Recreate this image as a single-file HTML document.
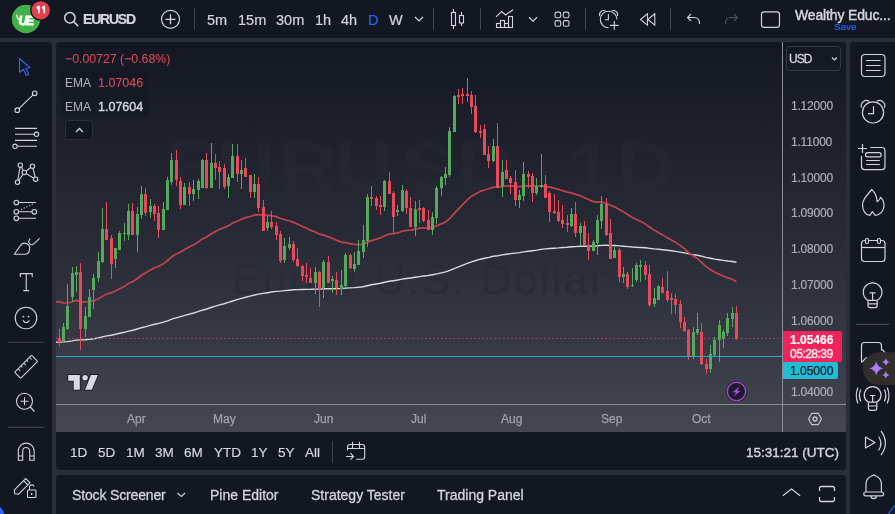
<!DOCTYPE html>
<html><head><meta charset="utf-8">
<style>
*{margin:0;padding:0;box-sizing:border-box}
html,body{width:895px;height:514px;overflow:hidden;background:#2a2e39;font-family:"Liberation Sans",sans-serif;color:#d1d4dc}
.abs{position:absolute}
.panel{position:absolute;background:#131722}
.t{position:absolute;white-space:nowrap;line-height:1;will-change:transform;-webkit-text-stroke-width:0.2px}
svg{position:absolute;left:0;top:0;overflow:visible}
</style></head>
<body>
<!-- panels -->
<div class="panel" style="left:0;top:0;width:895px;height:38px"></div>
<div class="panel" style="left:0;top:42px;width:52px;height:472px;border-radius:0 4px 0 0"></div>
<div class="panel" style="left:56px;top:42px;width:790px;height:428px;border-radius:4px;overflow:hidden">
  <div class="abs" style="left:0;top:0;width:790px;height:390px;background:linear-gradient(180deg,#131722 0%,#2a2d38 55%,#444751 100%)"></div>
</div>
<div class="panel" style="left:850px;top:42px;width:45px;height:472px;border-radius:4px 0 0 0"></div>
<div class="panel" style="left:56px;top:475px;width:790px;height:39px;border-radius:4px 4px 0 0"></div>

<!-- chart svg -->
<svg width="895" height="514" viewBox="0 0 895 514">
  <defs><clipPath id="cp"><rect x="56" y="42" width="726" height="362"/></clipPath></defs>
  <g clip-path="url(#cp)">
    <!-- watermark -->
    <text transform="scale(1.2 1)" x="138.5 180.2 231.8 278.5 334 380.2 431.7 450 472.9 513.5" y="190" font-family="Liberation Sans" font-weight="bold" font-size="68" fill="#282c37" fill-opacity="0.42">EURUSD, 1D</text>
    <text x="419" y="294" text-anchor="middle" font-family="Liberation Sans" font-size="43" fill="#272b36" fill-opacity="0.75" letter-spacing="2.2">Euro / U.S. Dollar</text>
    <path d="M56.0 342.1 L59.0 342.1 L63.4 341.9 L67.7 341.6 L72.1 340.9 L76.4 340.1 L80.7 339.9 L85.1 339.7 L89.4 339.3 L93.8 338.7 L98.1 338.0 L102.5 336.9 L106.8 335.9 L111.1 335.2 L115.5 334.3 L119.8 333.3 L124.2 332.3 L128.5 331.1 L132.9 330.2 L137.2 329.0 L141.5 327.7 L145.9 326.6 L150.2 325.4 L154.6 324.3 L158.9 323.4 L163.3 322.2 L167.6 320.8 L171.9 319.2 L176.3 317.9 L180.6 316.7 L185.0 315.4 L189.3 314.2 L193.7 313.0 L198.0 311.7 L202.3 310.2 L206.7 309.0 L211.0 307.5 L215.4 306.2 L219.7 304.8 L224.1 303.7 L228.4 302.4 L232.7 301.0 L237.1 299.7 L241.4 298.4 L245.8 297.2 L250.1 296.1 L254.5 295.0 L258.8 294.1 L263.1 293.4 L267.5 292.7 L271.8 292.0 L276.2 291.4 L280.5 291.1 L284.9 290.6 L289.2 290.2 L293.5 289.8 L297.9 289.6 L302.2 289.5 L306.6 289.4 L310.9 289.3 L315.3 289.1 L319.6 289.1 L323.9 288.8 L328.3 288.8 L332.6 288.7 L337.0 288.6 L341.3 288.5 L345.7 288.1 L350.0 287.9 L354.4 287.6 L358.7 287.2 L363.0 286.7 L367.4 285.7 L371.7 284.8 L376.1 284.0 L380.4 283.2 L384.8 282.2 L389.1 281.3 L393.4 280.7 L397.8 280.0 L402.1 279.1 L406.5 278.5 L410.8 278.0 L415.2 277.3 L419.5 276.6 L423.8 276.0 L428.2 275.5 L432.5 274.8 L436.9 273.9 L441.2 272.9 L445.6 271.9 L449.9 270.4 L454.2 268.6 L458.6 266.9 L462.9 265.1 L467.3 263.4 L471.6 261.8 L476.0 260.5 L480.3 259.2 L484.6 258.3 L489.0 257.4 L493.3 256.3 L497.7 255.7 L502.0 254.9 L506.4 254.2 L510.7 253.6 L515.0 253.1 L519.4 252.6 L523.7 251.9 L528.1 251.2 L532.4 250.7 L536.8 250.1 L541.1 249.4 L545.4 248.9 L549.8 248.5 L554.1 248.2 L558.5 247.9 L562.8 247.5 L567.2 247.2 L571.5 246.8 L575.8 246.6 L580.2 246.3 L584.5 246.2 L588.9 246.2 L593.2 246.1 L597.6 245.8 L601.9 245.4 L606.2 245.3 L610.6 245.5 L614.9 245.5 L619.3 245.9 L623.6 246.2 L628.0 246.6 L632.3 247.0 L636.6 247.3 L641.0 247.5 L645.3 247.8 L649.7 248.4 L654.0 248.9 L658.4 249.3 L662.7 249.8 L667.0 250.3 L671.4 250.8 L675.7 251.4 L680.1 252.1 L684.4 252.9 L688.8 253.9 L693.1 254.6 L697.4 255.3 L701.8 256.3 L706.1 257.4 L710.5 258.3 L714.8 259.1 L719.2 259.7 L723.5 260.4 L727.8 261.0 L732.2 261.5 L736.5 262.3" fill="none" stroke="#d9dade" stroke-width="1.4"/>
    <path d="M56.0 301.9 L59.0 301.9 L63.4 302.9 L67.7 303.0 L72.1 301.8 L76.4 300.5 L80.7 301.6 L85.1 302.0 L89.4 301.6 L93.8 300.6 L98.1 299.0 L102.5 296.2 L106.8 294.0 L111.1 292.9 L115.5 291.1 L119.8 288.8 L124.2 286.5 L128.5 283.5 L132.9 281.5 L137.2 278.7 L141.5 275.3 L145.9 272.8 L150.2 270.1 L154.6 267.8 L158.9 266.2 L163.3 263.8 L167.6 260.5 L171.9 256.7 L176.3 253.9 L180.6 251.9 L185.0 249.3 L189.3 247.1 L193.7 244.8 L198.0 242.2 L202.3 238.9 L206.7 236.9 L211.0 234.0 L215.4 231.5 L219.7 229.2 L224.1 227.6 L228.4 225.7 L232.7 223.0 L237.1 221.2 L241.4 219.2 L245.8 217.6 L250.1 216.5 L254.5 215.1 L258.8 214.7 L263.1 215.2 L267.5 215.4 L271.8 215.8 L276.2 216.6 L280.5 218.5 L284.9 219.7 L289.2 220.8 L293.5 222.4 L297.9 224.2 L302.2 226.3 L306.6 228.3 L310.9 230.4 L315.3 232.0 L319.6 234.2 L323.9 235.1 L328.3 236.9 L332.6 238.5 L337.0 240.4 L341.3 242.1 L345.7 242.6 L350.0 243.6 L354.4 244.4 L358.7 244.6 L363.0 244.3 L367.4 242.3 L371.7 240.6 L376.1 239.2 L380.4 237.9 L384.8 235.8 L389.1 234.2 L393.4 233.7 L397.8 232.9 L402.1 231.2 L406.5 230.3 L410.8 230.1 L415.2 229.1 L419.5 228.2 L423.8 227.9 L428.2 228.0 L432.5 227.4 L436.9 225.7 L441.2 223.9 L445.6 222.0 L449.9 218.4 L454.2 213.4 L458.6 208.8 L462.9 204.3 L467.3 199.9 L471.6 196.2 L476.0 193.7 L480.3 191.4 L484.6 190.0 L489.0 188.8 L493.3 187.1 L497.7 187.1 L502.0 186.4 L506.4 186.0 L510.7 185.8 L515.0 186.4 L519.4 186.7 L523.7 186.1 L528.1 185.7 L532.4 186.0 L536.8 186.0 L541.1 185.9 L545.4 186.3 L549.8 187.2 L554.1 188.1 L558.5 189.4 L562.8 190.7 L567.2 192.1 L571.5 192.9 L575.8 194.4 L580.2 195.6 L584.5 197.7 L588.9 199.8 L593.2 201.6 L597.6 202.2 L601.9 202.2 L606.2 203.3 L610.6 205.3 L614.9 206.9 L619.3 209.5 L623.6 211.9 L628.0 214.8 L632.3 217.5 L636.6 219.6 L641.0 221.6 L645.3 223.9 L649.7 227.2 L654.0 230.1 L658.4 232.5 L662.7 234.9 L667.0 237.6 L671.4 240.0 L675.7 242.4 L680.1 245.4 L684.4 248.7 L688.8 252.8 L693.1 255.8 L697.4 258.6 L701.8 262.6 L706.1 266.6 L710.5 269.8 L714.8 272.3 L719.2 274.1 L723.5 276.3 L727.8 277.9 L732.2 279.3 L736.5 281.7" fill="none" stroke="#c4424f" stroke-width="1.7"/>
    <g shape-rendering="crispEdges">
<rect x="59" y="329.0" width="1" height="17.0" fill="#e8495b"/>
<rect x="58" y="337.7" width="3" height="3.9" fill="#e8495b"/>
<rect x="63" y="323.0" width="1" height="18.6" fill="#55a95a"/>
<rect x="62" y="327.0" width="3" height="13.6" fill="#55a95a"/>
<rect x="67" y="284.0" width="1" height="46.0" fill="#55a95a"/>
<rect x="66" y="306.0" width="3" height="22.5" fill="#55a95a"/>
<rect x="72" y="267.0" width="1" height="35.0" fill="#55a95a"/>
<rect x="71" y="273.0" width="3" height="24.0" fill="#55a95a"/>
<rect x="76" y="266.0" width="1" height="26.0" fill="#55a95a"/>
<rect x="75" y="271.5" width="3" height="3.0" fill="#55a95a"/>
<rect x="80" y="263.0" width="1" height="87.0" fill="#e8495b"/>
<rect x="79" y="272.0" width="3" height="57.0" fill="#e8495b"/>
<rect x="85" y="307.0" width="1" height="30.0" fill="#55a95a"/>
<rect x="84" y="315.7" width="3" height="13.3" fill="#55a95a"/>
<rect x="89" y="289.0" width="1" height="28.0" fill="#55a95a"/>
<rect x="88" y="297.0" width="3" height="20.0" fill="#55a95a"/>
<rect x="93" y="273.5" width="1" height="35.0" fill="#55a95a"/>
<rect x="92" y="278.0" width="3" height="12.0" fill="#55a95a"/>
<rect x="98" y="252.0" width="1" height="30.0" fill="#55a95a"/>
<rect x="97" y="261.0" width="3" height="17.4" fill="#55a95a"/>
<rect x="102" y="208.0" width="1" height="55.0" fill="#55a95a"/>
<rect x="101" y="229.0" width="3" height="33.0" fill="#55a95a"/>
<rect x="106" y="202.0" width="1" height="37.5" fill="#e8495b"/>
<rect x="105" y="229.0" width="3" height="10.5" fill="#e8495b"/>
<rect x="111" y="234.6" width="1" height="44.4" fill="#e8495b"/>
<rect x="110" y="237.5" width="3" height="26.5" fill="#e8495b"/>
<rect x="115" y="248.0" width="1" height="19.7" fill="#55a95a"/>
<rect x="114" y="248.0" width="3" height="11.0" fill="#55a95a"/>
<rect x="119" y="231.0" width="1" height="19.0" fill="#55a95a"/>
<rect x="118" y="232.7" width="3" height="17.3" fill="#55a95a"/>
<rect x="124" y="223.0" width="1" height="18.4" fill="#55a95a"/>
<rect x="123" y="232.7" width="3" height="1.0" fill="#55a95a"/>
<rect x="128" y="203.5" width="1" height="36.0" fill="#55a95a"/>
<rect x="127" y="211.0" width="3" height="23.6" fill="#55a95a"/>
<rect x="132" y="203.0" width="1" height="31.6" fill="#e8495b"/>
<rect x="131" y="211.0" width="3" height="23.6" fill="#e8495b"/>
<rect x="137" y="206.8" width="1" height="45.2" fill="#55a95a"/>
<rect x="136" y="213.8" width="3" height="20.8" fill="#55a95a"/>
<rect x="141" y="186.0" width="1" height="33.0" fill="#55a95a"/>
<rect x="140" y="193.8" width="3" height="21.2" fill="#55a95a"/>
<rect x="145" y="188.0" width="1" height="28.0" fill="#e8495b"/>
<rect x="144" y="193.8" width="3" height="19.2" fill="#e8495b"/>
<rect x="150" y="199.0" width="1" height="19.0" fill="#55a95a"/>
<rect x="149" y="206.0" width="3" height="6.2" fill="#55a95a"/>
<rect x="154" y="204.0" width="1" height="17.0" fill="#e8495b"/>
<rect x="153" y="206.0" width="3" height="8.0" fill="#e8495b"/>
<rect x="158" y="206.0" width="1" height="31.5" fill="#e8495b"/>
<rect x="157" y="213.0" width="3" height="16.7" fill="#e8495b"/>
<rect x="163" y="202.0" width="1" height="28.0" fill="#55a95a"/>
<rect x="162" y="209.0" width="3" height="20.7" fill="#55a95a"/>
<rect x="167" y="176.7" width="1" height="33.1" fill="#55a95a"/>
<rect x="166" y="179.6" width="3" height="30.2" fill="#55a95a"/>
<rect x="171" y="153.0" width="1" height="31.5" fill="#55a95a"/>
<rect x="170" y="159.6" width="3" height="22.0" fill="#55a95a"/>
<rect x="176" y="149.5" width="1" height="36.9" fill="#e8495b"/>
<rect x="175" y="159.6" width="3" height="20.6" fill="#e8495b"/>
<rect x="180" y="176.7" width="1" height="32.1" fill="#e8495b"/>
<rect x="179" y="181.0" width="3" height="24.0" fill="#e8495b"/>
<rect x="184" y="182.5" width="1" height="22.5" fill="#55a95a"/>
<rect x="183" y="186.8" width="3" height="18.2" fill="#55a95a"/>
<rect x="189" y="181.6" width="1" height="24.3" fill="#e8495b"/>
<rect x="188" y="186.8" width="3" height="7.4" fill="#e8495b"/>
<rect x="193" y="179.6" width="1" height="21.4" fill="#55a95a"/>
<rect x="192" y="188.8" width="3" height="5.4" fill="#55a95a"/>
<rect x="198" y="178.6" width="1" height="20.4" fill="#55a95a"/>
<rect x="197" y="181.0" width="3" height="9.3" fill="#55a95a"/>
<rect x="202" y="158.8" width="1" height="29.6" fill="#55a95a"/>
<rect x="201" y="159.6" width="3" height="28.8" fill="#55a95a"/>
<rect x="206" y="153.0" width="1" height="36.3" fill="#e8495b"/>
<rect x="205" y="159.6" width="3" height="28.8" fill="#e8495b"/>
<rect x="211" y="142.6" width="1" height="45.8" fill="#55a95a"/>
<rect x="210" y="162.7" width="3" height="25.7" fill="#55a95a"/>
<rect x="215" y="154.3" width="1" height="25.3" fill="#e8495b"/>
<rect x="214" y="163.0" width="3" height="5.0" fill="#e8495b"/>
<rect x="219" y="160.7" width="1" height="28.6" fill="#e8495b"/>
<rect x="218" y="167.0" width="3" height="4.8" fill="#e8495b"/>
<rect x="224" y="164.0" width="1" height="25.3" fill="#e8495b"/>
<rect x="223" y="168.0" width="3" height="19.4" fill="#e8495b"/>
<rect x="228" y="173.8" width="1" height="24.2" fill="#55a95a"/>
<rect x="227" y="176.7" width="3" height="9.7" fill="#55a95a"/>
<rect x="232" y="143.9" width="1" height="34.1" fill="#55a95a"/>
<rect x="231" y="156.0" width="3" height="22.0" fill="#55a95a"/>
<rect x="237" y="143.9" width="1" height="37.9" fill="#e8495b"/>
<rect x="236" y="156.0" width="3" height="18.0" fill="#e8495b"/>
<rect x="241" y="159.5" width="1" height="29.1" fill="#55a95a"/>
<rect x="240" y="170.0" width="3" height="4.0" fill="#55a95a"/>
<rect x="245" y="158.0" width="1" height="19.0" fill="#e8495b"/>
<rect x="244" y="168.0" width="3" height="9.0" fill="#e8495b"/>
<rect x="250" y="175.0" width="1" height="23.4" fill="#e8495b"/>
<rect x="249" y="175.4" width="3" height="16.2" fill="#e8495b"/>
<rect x="254" y="174.0" width="1" height="24.4" fill="#55a95a"/>
<rect x="253" y="183.8" width="3" height="8.2" fill="#55a95a"/>
<rect x="258" y="176.6" width="1" height="35.4" fill="#e8495b"/>
<rect x="257" y="183.8" width="3" height="24.2" fill="#e8495b"/>
<rect x="263" y="200.3" width="1" height="31.1" fill="#e8495b"/>
<rect x="262" y="207.0" width="3" height="24.4" fill="#e8495b"/>
<rect x="267" y="215.9" width="1" height="15.5" fill="#55a95a"/>
<rect x="266" y="221.7" width="3" height="5.8" fill="#55a95a"/>
<rect x="271" y="211.0" width="1" height="17.5" fill="#e8495b"/>
<rect x="270" y="221.7" width="3" height="4.9" fill="#e8495b"/>
<rect x="276" y="221.7" width="1" height="18.3" fill="#e8495b"/>
<rect x="275" y="225.6" width="3" height="9.4" fill="#e8495b"/>
<rect x="280" y="231.0" width="1" height="31.5" fill="#e8495b"/>
<rect x="279" y="233.7" width="3" height="27.3" fill="#e8495b"/>
<rect x="284" y="238.0" width="1" height="24.5" fill="#55a95a"/>
<rect x="283" y="246.0" width="3" height="13.6" fill="#55a95a"/>
<rect x="289" y="236.8" width="1" height="13.2" fill="#55a95a"/>
<rect x="288" y="244.0" width="3" height="4.0" fill="#55a95a"/>
<rect x="293" y="241.0" width="1" height="20.5" fill="#e8495b"/>
<rect x="292" y="244.0" width="3" height="15.6" fill="#e8495b"/>
<rect x="297" y="248.0" width="1" height="19.4" fill="#e8495b"/>
<rect x="296" y="258.6" width="3" height="7.8" fill="#e8495b"/>
<rect x="302" y="264.5" width="1" height="16.5" fill="#e8495b"/>
<rect x="301" y="266.0" width="3" height="10.0" fill="#e8495b"/>
<rect x="306" y="262.5" width="1" height="20.5" fill="#e8495b"/>
<rect x="305" y="275.0" width="3" height="2.0" fill="#e8495b"/>
<rect x="310" y="268.4" width="1" height="14.6" fill="#e8495b"/>
<rect x="309" y="277.7" width="3" height="5.3" fill="#e8495b"/>
<rect x="315" y="266.8" width="1" height="26.9" fill="#55a95a"/>
<rect x="314" y="272.3" width="3" height="10.7" fill="#55a95a"/>
<rect x="319" y="271.3" width="1" height="36.0" fill="#e8495b"/>
<rect x="318" y="272.3" width="3" height="16.5" fill="#e8495b"/>
<rect x="323" y="260.0" width="1" height="37.5" fill="#55a95a"/>
<rect x="322" y="261.6" width="3" height="26.2" fill="#55a95a"/>
<rect x="328" y="255.7" width="1" height="27.3" fill="#e8495b"/>
<rect x="327" y="261.6" width="3" height="21.4" fill="#e8495b"/>
<rect x="332" y="276.0" width="1" height="16.7" fill="#55a95a"/>
<rect x="331" y="279.0" width="3" height="2.0" fill="#55a95a"/>
<rect x="336" y="271.7" width="1" height="23.3" fill="#e8495b"/>
<rect x="335" y="280.0" width="3" height="8.0" fill="#e8495b"/>
<rect x="341" y="270.0" width="1" height="25.0" fill="#55a95a"/>
<rect x="340" y="285.0" width="3" height="3.6" fill="#55a95a"/>
<rect x="345" y="253.0" width="1" height="34.0" fill="#55a95a"/>
<rect x="344" y="254.8" width="3" height="31.5" fill="#55a95a"/>
<rect x="350" y="253.7" width="1" height="15.7" fill="#e8495b"/>
<rect x="349" y="254.6" width="3" height="13.6" fill="#e8495b"/>
<rect x="354" y="252.0" width="1" height="19.7" fill="#55a95a"/>
<rect x="353" y="264.0" width="3" height="4.8" fill="#55a95a"/>
<rect x="358" y="240.0" width="1" height="24.7" fill="#55a95a"/>
<rect x="357" y="250.7" width="3" height="14.0" fill="#55a95a"/>
<rect x="363" y="225.0" width="1" height="32.7" fill="#55a95a"/>
<rect x="362" y="240.0" width="3" height="11.7" fill="#55a95a"/>
<rect x="367" y="194.0" width="1" height="52.6" fill="#55a95a"/>
<rect x="366" y="197.0" width="3" height="43.7" fill="#55a95a"/>
<rect x="371" y="186.0" width="1" height="19.7" fill="#e8495b"/>
<rect x="370" y="197.0" width="3" height="2.0" fill="#e8495b"/>
<rect x="376" y="196.0" width="1" height="13.6" fill="#e8495b"/>
<rect x="375" y="198.0" width="3" height="7.7" fill="#e8495b"/>
<rect x="380" y="196.0" width="1" height="18.5" fill="#e8495b"/>
<rect x="379" y="204.7" width="3" height="2.0" fill="#e8495b"/>
<rect x="384" y="179.5" width="1" height="31.1" fill="#55a95a"/>
<rect x="383" y="181.4" width="3" height="25.3" fill="#55a95a"/>
<rect x="389" y="171.7" width="1" height="22.3" fill="#e8495b"/>
<rect x="388" y="181.4" width="3" height="12.6" fill="#e8495b"/>
<rect x="393" y="191.0" width="1" height="42.0" fill="#e8495b"/>
<rect x="392" y="193.0" width="3" height="24.4" fill="#e8495b"/>
<rect x="397" y="204.7" width="1" height="11.7" fill="#55a95a"/>
<rect x="396" y="209.6" width="3" height="2.0" fill="#55a95a"/>
<rect x="402" y="185.0" width="1" height="27.0" fill="#55a95a"/>
<rect x="401" y="190.0" width="3" height="21.3" fill="#55a95a"/>
<rect x="406" y="189.0" width="1" height="25.0" fill="#e8495b"/>
<rect x="405" y="190.6" width="3" height="17.7" fill="#e8495b"/>
<rect x="410" y="197.4" width="1" height="29.2" fill="#e8495b"/>
<rect x="409" y="208.0" width="3" height="18.6" fill="#e8495b"/>
<rect x="415" y="201.0" width="1" height="34.5" fill="#55a95a"/>
<rect x="414" y="209.2" width="3" height="17.4" fill="#55a95a"/>
<rect x="419" y="200.0" width="1" height="22.7" fill="#e8495b"/>
<rect x="418" y="208.0" width="3" height="2.0" fill="#e8495b"/>
<rect x="423" y="207.0" width="1" height="14.7" fill="#e8495b"/>
<rect x="422" y="208.0" width="3" height="12.7" fill="#e8495b"/>
<rect x="428" y="210.0" width="1" height="19.5" fill="#e8495b"/>
<rect x="427" y="219.8" width="3" height="9.7" fill="#e8495b"/>
<rect x="432" y="212.0" width="1" height="23.0" fill="#55a95a"/>
<rect x="431" y="216.8" width="3" height="12.7" fill="#55a95a"/>
<rect x="436" y="185.8" width="1" height="38.0" fill="#55a95a"/>
<rect x="435" y="187.7" width="3" height="30.1" fill="#55a95a"/>
<rect x="441" y="176.0" width="1" height="20.4" fill="#55a95a"/>
<rect x="440" y="176.6" width="3" height="11.1" fill="#55a95a"/>
<rect x="445" y="167.2" width="1" height="17.5" fill="#55a95a"/>
<rect x="444" y="174.0" width="3" height="4.0" fill="#55a95a"/>
<rect x="449" y="127.4" width="1" height="49.6" fill="#55a95a"/>
<rect x="448" y="131.3" width="3" height="43.7" fill="#55a95a"/>
<rect x="454" y="95.0" width="1" height="37.3" fill="#55a95a"/>
<rect x="453" y="96.3" width="3" height="35.6" fill="#55a95a"/>
<rect x="458" y="89.0" width="1" height="15.0" fill="#e8495b"/>
<rect x="457" y="95.3" width="3" height="1.9" fill="#e8495b"/>
<rect x="462" y="87.9" width="1" height="15.6" fill="#e8495b"/>
<rect x="461" y="93.7" width="3" height="2.0" fill="#e8495b"/>
<rect x="467" y="77.8" width="1" height="24.2" fill="#e8495b"/>
<rect x="466" y="93.7" width="3" height="2.0" fill="#e8495b"/>
<rect x="471" y="91.0" width="1" height="22.8" fill="#e8495b"/>
<rect x="470" y="94.9" width="3" height="12.1" fill="#e8495b"/>
<rect x="475" y="95.0" width="1" height="38.2" fill="#e8495b"/>
<rect x="474" y="106.0" width="3" height="25.9" fill="#e8495b"/>
<rect x="480" y="124.9" width="1" height="13.1" fill="#e8495b"/>
<rect x="479" y="130.7" width="3" height="1.9" fill="#e8495b"/>
<rect x="484" y="124.0" width="1" height="30.6" fill="#e8495b"/>
<rect x="483" y="128.8" width="3" height="25.8" fill="#e8495b"/>
<rect x="488" y="145.9" width="1" height="22.1" fill="#e8495b"/>
<rect x="487" y="153.7" width="3" height="6.8" fill="#e8495b"/>
<rect x="493" y="139.0" width="1" height="23.4" fill="#55a95a"/>
<rect x="492" y="145.9" width="3" height="14.6" fill="#55a95a"/>
<rect x="497" y="122.5" width="1" height="65.9" fill="#e8495b"/>
<rect x="496" y="146.0" width="3" height="42.0" fill="#e8495b"/>
<rect x="502" y="160.0" width="1" height="37.0" fill="#55a95a"/>
<rect x="501" y="171.8" width="3" height="14.6" fill="#55a95a"/>
<rect x="506" y="160.0" width="1" height="18.6" fill="#e8495b"/>
<rect x="505" y="170.0" width="3" height="8.6" fill="#e8495b"/>
<rect x="510" y="175.7" width="1" height="18.5" fill="#e8495b"/>
<rect x="509" y="177.7" width="3" height="4.8" fill="#e8495b"/>
<rect x="515" y="170.0" width="1" height="35.9" fill="#e8495b"/>
<rect x="514" y="181.6" width="3" height="18.4" fill="#e8495b"/>
<rect x="519" y="190.3" width="1" height="17.5" fill="#55a95a"/>
<rect x="518" y="195.0" width="3" height="5.0" fill="#55a95a"/>
<rect x="523" y="162.0" width="1" height="39.0" fill="#55a95a"/>
<rect x="522" y="173.8" width="3" height="22.2" fill="#55a95a"/>
<rect x="528" y="170.9" width="1" height="17.5" fill="#e8495b"/>
<rect x="527" y="174.4" width="3" height="2.3" fill="#e8495b"/>
<rect x="532" y="172.8" width="1" height="29.2" fill="#e8495b"/>
<rect x="531" y="175.7" width="3" height="17.5" fill="#e8495b"/>
<rect x="536" y="177.7" width="1" height="17.3" fill="#55a95a"/>
<rect x="535" y="186.0" width="3" height="7.2" fill="#55a95a"/>
<rect x="541" y="153.7" width="1" height="34.7" fill="#55a95a"/>
<rect x="540" y="184.5" width="3" height="2.3" fill="#55a95a"/>
<rect x="545" y="174.7" width="1" height="23.3" fill="#e8495b"/>
<rect x="544" y="184.0" width="3" height="14.0" fill="#e8495b"/>
<rect x="549" y="191.3" width="1" height="31.1" fill="#e8495b"/>
<rect x="548" y="193.2" width="3" height="18.5" fill="#e8495b"/>
<rect x="554" y="193.8" width="1" height="19.9" fill="#e8495b"/>
<rect x="553" y="210.7" width="3" height="2.6" fill="#e8495b"/>
<rect x="558" y="199.6" width="1" height="22.8" fill="#e8495b"/>
<rect x="557" y="211.7" width="3" height="8.8" fill="#e8495b"/>
<rect x="562" y="205.4" width="1" height="22.4" fill="#e8495b"/>
<rect x="561" y="219.5" width="3" height="4.5" fill="#e8495b"/>
<rect x="567" y="215.0" width="1" height="16.7" fill="#e8495b"/>
<rect x="566" y="223.0" width="3" height="2.0" fill="#e8495b"/>
<rect x="571" y="208.0" width="1" height="18.8" fill="#55a95a"/>
<rect x="570" y="213.8" width="3" height="12.1" fill="#55a95a"/>
<rect x="575" y="202.0" width="1" height="34.6" fill="#e8495b"/>
<rect x="574" y="213.8" width="3" height="18.9" fill="#e8495b"/>
<rect x="580" y="223.0" width="1" height="23.3" fill="#55a95a"/>
<rect x="579" y="225.9" width="3" height="6.8" fill="#55a95a"/>
<rect x="584" y="221.0" width="1" height="25.3" fill="#e8495b"/>
<rect x="583" y="225.9" width="3" height="20.4" fill="#e8495b"/>
<rect x="588" y="232.7" width="1" height="27.3" fill="#e8495b"/>
<rect x="587" y="245.7" width="3" height="5.3" fill="#e8495b"/>
<rect x="593" y="240.4" width="1" height="10.6" fill="#55a95a"/>
<rect x="592" y="242.4" width="3" height="8.6" fill="#55a95a"/>
<rect x="597" y="215.0" width="1" height="40.0" fill="#55a95a"/>
<rect x="596" y="220.0" width="3" height="23.4" fill="#55a95a"/>
<rect x="601" y="196.3" width="1" height="32.5" fill="#55a95a"/>
<rect x="600" y="203.5" width="3" height="17.5" fill="#55a95a"/>
<rect x="606" y="198.2" width="1" height="37.4" fill="#e8495b"/>
<rect x="605" y="203.5" width="3" height="31.1" fill="#e8495b"/>
<rect x="610" y="219.0" width="1" height="39.9" fill="#e8495b"/>
<rect x="609" y="232.7" width="3" height="26.2" fill="#e8495b"/>
<rect x="614" y="247.3" width="1" height="10.7" fill="#55a95a"/>
<rect x="613" y="250.0" width="3" height="8.0" fill="#55a95a"/>
<rect x="619" y="248.0" width="1" height="34.0" fill="#e8495b"/>
<rect x="618" y="250.0" width="3" height="27.0" fill="#e8495b"/>
<rect x="623" y="266.8" width="1" height="16.2" fill="#55a95a"/>
<rect x="622" y="273.8" width="3" height="2.7" fill="#55a95a"/>
<rect x="627" y="272.0" width="1" height="16.8" fill="#e8495b"/>
<rect x="626" y="273.8" width="3" height="13.6" fill="#e8495b"/>
<rect x="632" y="268.0" width="1" height="18.8" fill="#55a95a"/>
<rect x="631" y="284.9" width="3" height="1.3" fill="#55a95a"/>
<rect x="636" y="262.9" width="1" height="19.1" fill="#55a95a"/>
<rect x="635" y="265.4" width="3" height="14.6" fill="#55a95a"/>
<rect x="640" y="259.6" width="1" height="22.4" fill="#55a95a"/>
<rect x="639" y="264.5" width="3" height="2.3" fill="#55a95a"/>
<rect x="645" y="260.6" width="1" height="19.4" fill="#e8495b"/>
<rect x="644" y="264.5" width="3" height="10.5" fill="#e8495b"/>
<rect x="649" y="264.5" width="1" height="42.8" fill="#e8495b"/>
<rect x="648" y="273.8" width="3" height="31.5" fill="#e8495b"/>
<rect x="654" y="288.0" width="1" height="19.3" fill="#55a95a"/>
<rect x="653" y="297.5" width="3" height="6.8" fill="#55a95a"/>
<rect x="658" y="284.9" width="1" height="15.5" fill="#55a95a"/>
<rect x="657" y="286.2" width="3" height="13.3" fill="#55a95a"/>
<rect x="662" y="277.7" width="1" height="15.0" fill="#e8495b"/>
<rect x="661" y="286.8" width="3" height="5.9" fill="#e8495b"/>
<rect x="667" y="270.7" width="1" height="31.1" fill="#e8495b"/>
<rect x="666" y="290.7" width="3" height="8.8" fill="#e8495b"/>
<rect x="671" y="292.7" width="1" height="21.3" fill="#e8495b"/>
<rect x="670" y="297.5" width="3" height="2.0" fill="#e8495b"/>
<rect x="675" y="293.9" width="1" height="20.4" fill="#e8495b"/>
<rect x="674" y="298.8" width="3" height="5.8" fill="#e8495b"/>
<rect x="680" y="299.7" width="1" height="28.3" fill="#e8495b"/>
<rect x="679" y="303.6" width="3" height="18.4" fill="#e8495b"/>
<rect x="684" y="317.2" width="1" height="14.6" fill="#e8495b"/>
<rect x="683" y="322.0" width="3" height="8.9" fill="#e8495b"/>
<rect x="688" y="328.9" width="1" height="31.1" fill="#e8495b"/>
<rect x="687" y="329.9" width="3" height="27.1" fill="#e8495b"/>
<rect x="693" y="327.0" width="1" height="32.0" fill="#55a95a"/>
<rect x="692" y="331.8" width="3" height="24.2" fill="#55a95a"/>
<rect x="697" y="313.3" width="1" height="21.4" fill="#55a95a"/>
<rect x="696" y="328.9" width="3" height="4.3" fill="#55a95a"/>
<rect x="701" y="322.7" width="1" height="42.2" fill="#e8495b"/>
<rect x="700" y="331.8" width="3" height="32.2" fill="#e8495b"/>
<rect x="706" y="359.0" width="1" height="14.7" fill="#e8495b"/>
<rect x="705" y="364.0" width="3" height="4.8" fill="#e8495b"/>
<rect x="710" y="344.5" width="1" height="28.2" fill="#55a95a"/>
<rect x="709" y="354.2" width="3" height="14.6" fill="#55a95a"/>
<rect x="714" y="336.7" width="1" height="19.3" fill="#55a95a"/>
<rect x="713" y="339.6" width="3" height="15.6" fill="#55a95a"/>
<rect x="719" y="320.0" width="1" height="42.0" fill="#55a95a"/>
<rect x="718" y="325.0" width="3" height="14.6" fill="#55a95a"/>
<rect x="723" y="329.9" width="1" height="18.5" fill="#55a95a"/>
<rect x="722" y="331.8" width="3" height="6.8" fill="#55a95a"/>
<rect x="727" y="313.0" width="1" height="22.7" fill="#55a95a"/>
<rect x="726" y="318.2" width="3" height="14.6" fill="#55a95a"/>
<rect x="732" y="306.5" width="1" height="20.5" fill="#55a95a"/>
<rect x="731" y="313.0" width="3" height="5.8" fill="#55a95a"/>
<rect x="736" y="306.0" width="1" height="33.6" fill="#e8495b"/>
<rect x="735" y="313.0" width="3" height="25.9" fill="#e8495b"/>
    </g>
    <line x1="56" y1="338.5" x2="782" y2="338.5" stroke="#b43c62" stroke-width="1" stroke-dasharray="1.6 2.5"/>
    <rect x="56" y="356" width="726" height="1" fill="#2aa9c3"/>
  </g>
  <!-- axes -->
  <rect x="782" y="42" width="1" height="390" fill="#8a8d97"/>
  <rect x="56" y="404" width="790" height="1" fill="#8a8d97"/>
</svg>

<!-- price axis labels -->
<div class="t" style="left:786px;top:46px;width:55px;height:25px;border:1px solid #363a45;border-radius:4px"></div>
<div class="t" style="left:789.3px;top:53px;font-size:12px;color:#d1d4dc;letter-spacing:-1px;-webkit-text-stroke:0.3px #d1d4dc">USD</div>
<svg width="895" height="514"><path d="M832 57.5 l2.5 2.5 l2.5 -2.5" fill="none" stroke="#d1d4dc" stroke-width="1.2"/></svg>
<div class="t" style="left:790.5px;top:100.4px;font-size:12px;color:#a9acb5;letter-spacing:-0.2px">1.12000</div>
<div class="t" style="left:790.5px;top:136.1px;font-size:12px;color:#a9acb5;letter-spacing:-0.2px">1.11000</div>
<div class="t" style="left:790.5px;top:171.8px;font-size:12px;color:#a9acb5;letter-spacing:-0.2px">1.10000</div>
<div class="t" style="left:790.5px;top:207.4px;font-size:12px;color:#a9acb5;letter-spacing:-0.2px">1.09000</div>
<div class="t" style="left:790.5px;top:243.1px;font-size:12px;color:#a9acb5;letter-spacing:-0.2px">1.08000</div>
<div class="t" style="left:790.5px;top:278.8px;font-size:12px;color:#a9acb5;letter-spacing:-0.2px">1.07000</div>
<div class="t" style="left:790.5px;top:314.5px;font-size:12px;color:#a9acb5;letter-spacing:-0.2px">1.06000</div>
<div class="t" style="left:790.5px;top:385.8px;font-size:12px;color:#a9acb5;letter-spacing:-0.2px">1.04000</div>
<div class="abs" style="left:783px;top:331px;width:59px;height:31px;background:#f0245a;border-radius:0 2px 2px 0"></div>
<div class="t" style="left:790px;top:334px;font-size:12px;font-weight:bold;color:#ffffff;letter-spacing:0px">1.05466</div>
<div class="t" style="left:790px;top:348px;font-size:12px;color:#ffe3ea;letter-spacing:-0.5px;-webkit-text-stroke:0.5px #ffe3ea">05:28:39</div>
<div class="abs" style="left:783px;top:362px;width:55px;height:17px;background:#22bcd6;border-radius:0 2px 2px 0"></div>
<div class="t" style="left:790px;top:365px;font-size:12px;color:#131722;letter-spacing:0px">1.05000</div>

<!-- time axis -->
<div class="t" style="left:127px;top:412.5px;font-size:12px;color:#9ea1aa;-webkit-text-stroke:0.25px #9ea1aa">Apr</div>
<div class="t" style="left:213px;top:412.5px;font-size:12px;color:#9ea1aa;-webkit-text-stroke:0.25px #9ea1aa">May</div>
<div class="t" style="left:314px;top:412.5px;font-size:12px;color:#9ea1aa;-webkit-text-stroke:0.25px #9ea1aa">Jun</div>
<div class="t" style="left:411px;top:412.5px;font-size:12px;color:#9ea1aa;-webkit-text-stroke:0.25px #9ea1aa">Jul</div>
<div class="t" style="left:501px;top:412.5px;font-size:12px;color:#9ea1aa;-webkit-text-stroke:0.25px #9ea1aa">Aug</div>
<div class="t" style="left:600.5px;top:412.5px;font-size:12px;color:#9ea1aa;-webkit-text-stroke:0.25px #9ea1aa">Sep</div>
<div class="t" style="left:692px;top:412.5px;font-size:12px;color:#9ea1aa;-webkit-text-stroke:0.25px #9ea1aa">Oct</div>

<!-- legend -->
<div class="abs" style="left:61px;top:71px;width:88px;height:46px;background:rgba(19,23,34,0.55);border-radius:3px"></div>
<div class="t" style="left:64.5px;top:53px;font-size:12.3px;color:#dc4b5b;-webkit-text-stroke-width:0.05px">−0.00727 (−0.68%)</div>
<div class="t" style="left:65px;top:77px;font-size:12px;color:#a9acb5;-webkit-text-stroke-width:0.1px">EMA</div>
<div class="t" style="left:97.5px;top:76.5px;font-size:12.5px;color:#dc4b5b;-webkit-text-stroke-width:0.1px">1.07046</div>
<div class="t" style="left:65px;top:101px;font-size:12px;color:#a9acb5;-webkit-text-stroke-width:0.1px">EMA</div>
<div class="t" style="left:97.5px;top:100.5px;font-size:12.5px;color:#d1d4dc;-webkit-text-stroke:0.4px #d1d4dc">1.07604</div>
<div class="abs" style="left:65px;top:120px;width:28px;height:20px;background:#131722;border:1px solid #2a2e39;border-radius:3px"></div>
<svg width="895" height="514"><path d="M76 132 l3.5 -3.5 l3.5 3.5" fill="none" stroke="#d1d4dc" stroke-width="1.3"/></svg>


<!-- TOP BAR -->
<svg width="895" height="514">
  <circle cx="26" cy="19" r="14.2" fill="#43b049"/>
  <text x="18.6" y="24.6" font-family="Liberation Sans" font-weight="bold" font-style="italic" font-size="12.5" fill="#f2fbf0" stroke="#f2fbf0" stroke-width="0.9" letter-spacing="-1.8">UE</text>
  <path d="M16.8 15.2 q0.2 2.5 1.6 4" fill="none" stroke="#e6f5e4" stroke-width="1.4" stroke-linecap="round"/>
  <circle cx="40.7" cy="10.3" r="10.6" fill="#131722"/>
  <circle cx="40.7" cy="10.3" r="9.1" fill="#e8404f"/>
  <circle cx="69.9" cy="17.8" r="5.2" fill="none" stroke="#d1d4dc" stroke-width="1.5"/>
  <path d="M73.8 21.7 L77.7 25.6" stroke="#d1d4dc" stroke-width="1.5" stroke-linecap="round"/>
  <circle cx="170.5" cy="19.3" r="9" fill="none" stroke="#d1d4dc" stroke-width="1.2"/>
  <path d="M170.5 14.3 v10 M165.5 19.3 h10" stroke="#d1d4dc" stroke-width="1.3"/>
  <g fill="#434651">
    <rect x="194" y="8" width="1" height="22"/>
    <rect x="433" y="8" width="1" height="22"/>
    <rect x="480" y="8" width="1" height="22"/>
    <rect x="585" y="8" width="1" height="22"/>
    <rect x="670" y="8" width="1" height="22"/>
  </g>
  <path d="M415 17 l4 4 l4 -4" fill="none" stroke="#d1d4dc" stroke-width="1.2"/>
  <!-- candles icon -->
  <g fill="none" stroke="#d1d4dc" stroke-width="1.1">
    <rect x="451.5" y="12.5" width="4" height="13"/>
    <path d="M453.5 9 v3.5 M453.5 25.5 v3.5"/>
    <rect x="459.5" y="15.5" width="4" height="7.5"/>
    <path d="M461.5 12 v3.5 M461.5 23 v3"/>
  </g>
  <!-- indicators icon -->
  <g fill="none" stroke="#d1d4dc" stroke-width="1.1">
    <path d="M496 16.9 L501.7 11.6 L505.5 15 L513.1 9.7"/>
    <rect x="496.5" y="23.5" width="4" height="4"/><rect x="500.5" y="20.5" width="4" height="7"/><rect x="504.5" y="23.5" width="4" height="4"/><rect x="508.5" y="16.5" width="4" height="11"/>
  </g>
  <path d="M529 17.3 l4 3.8 l4 -3.8" fill="none" stroke="#d1d4dc" stroke-width="1.2"/>
  <!-- layout grid -->
  <g fill="none" stroke="#d1d4dc" stroke-width="1.1">
    <rect x="555" y="12.1" width="5.7" height="5.7" rx="1.8"/>
    <rect x="563.3" y="12.1" width="5.7" height="5.7" rx="1.8"/>
    <rect x="555" y="20.6" width="5.7" height="5.7" rx="1.8"/>
    <rect x="563.3" y="20.6" width="5.7" height="5.7" rx="1.8"/>
  </g>
  <!-- alert -->
  <g fill="none" stroke="#d1d4dc" stroke-width="1.1">
    <path d="M608.6 27.8 A8.3 8.3 0 1 1 616.9 19.5"/>
    <path d="M599.8 16.2 A4.3 4.3 0 0 1 605.6 10.9 M617.4 16.2 A4.3 4.3 0 0 0 611.6 10.9"/>
    <path d="M608.4 14 V19.7 H605"/>
    <path d="M614.3 21 V29.8 M609.9 25.4 H618.7"/>
  </g>
  <!-- replay -->
  <g fill="none" stroke="#d1d4dc" stroke-width="1.1">
    <path d="M647.5 13.8 L640.5 19.5 L647.5 25.2 Z"/>
    <path d="M654.8 13.8 L647.8 19.5 L654.8 25.2 Z"/>
  </g>
  <!-- undo/redo -->
  <path d="M691 14 L687.5 17.5 L691 21 M687.5 17.5 H694 Q699.5 17.5 699.5 23.5 V24" fill="none" stroke="#d1d4dc" stroke-width="1.1"/>
  <path d="M734 14 L737.5 17.5 L734 21 M737.5 17.5 H731 Q725.5 17.5 725.5 23.5 V24" fill="none" stroke="#50535e" stroke-width="1.1"/>
  <rect x="761.5" y="11.8" width="18" height="15.5" rx="2.5" fill="none" stroke="#d1d4dc" stroke-width="1.2"/>
</svg>
<svg width="895" height="514"><path d="M36.6 8.4 L38.9 6.5 V13.2 M41.9 8.4 L44.2 6.5 V13.2" fill="none" stroke="#fff" stroke-width="1.7" stroke-linejoin="round"/></svg>
<div class="t" style="left:82.5px;top:12px;font-size:14px;font-weight:bold;color:#d1d4dc;letter-spacing:-1.2px">EURUSD</div>
<div class="t" style="left:207px;top:12.5px;font-size:14.5px;color:#d1d4dc">5m</div>
<div class="t" style="left:238px;top:12.5px;font-size:14.5px;color:#d1d4dc">15m</div>
<div class="t" style="left:276px;top:12.5px;font-size:14.5px;color:#d1d4dc">30m</div>
<div class="t" style="left:315px;top:12.5px;font-size:14.5px;color:#d1d4dc">1h</div>
<div class="t" style="left:341px;top:12.5px;font-size:14.5px;color:#d1d4dc">4h</div>
<div class="t" style="left:368px;top:12.5px;font-size:14.5px;color:#2962ff">D</div>
<div class="t" style="left:389px;top:12.5px;font-size:14.5px;color:#d1d4dc">W</div>
<div class="t" style="left:794.5px;top:7.5px;font-size:14px;color:#d1d4dc;letter-spacing:-0.15px;-webkit-text-stroke:0.45px #d1d4dc">Wealthy Educ...</div>
<div class="t" style="left:833.5px;top:22px;font-size:9.8px;color:#2962ff">Save</div>

<!-- LEFT TOOLBAR -->
<svg width="895" height="514">
  <path d="M19.5 58.5 L30 67.8 L25.8 68.2 L28.8 74.3 L26.4 75.4 L23.5 69.3 L19.5 72.3 Z" fill="none" stroke="#3b63e6" stroke-width="1.15" stroke-linejoin="round"/>
  <g fill="none" stroke="#d1d4dc" stroke-width="1.1">
    <circle cx="34.7" cy="93.3" r="2.3"/><circle cx="17.3" cy="110.2" r="2.3"/>
    <path d="M33.1 94.9 L18.9 108.6"/>
    <path d="M15 128.4 H37 M15 134.3 H34.3 M15 140.4 H37 M17.3 146.3 H37"/>
    <circle cx="36.5" cy="134.3" r="2.2"/><circle cx="15" cy="146.3" r="2.2"/>
    <circle cx="20.3" cy="165.2" r="2.2"/><circle cx="32.5" cy="166.2" r="2.2"/><circle cx="24.3" cy="172.4" r="2.2"/><circle cx="17.5" cy="182.2" r="2.2"/><circle cx="35.6" cy="179.2" r="2.2"/>
    <path d="M21.5 167.1 L23.2 170.5 M26.3 171.2 L30.6 167.5 M23 174.3 L18.8 180.4 M20 167.4 L17.8 180 M33 168.4 L35.1 177 M26.3 173.6 L33.7 178.2"/>
    <circle cx="16.3" cy="202.5" r="2.3"/><circle cx="16.3" cy="211.8" r="2.3"/><circle cx="16.3" cy="218.3" r="2.3"/><circle cx="34.3" cy="211.8" r="2.3"/>
    <path d="M18.6 202.5 H36 M18.6 211.8 H32 M18.6 218.3 H36"/>
    <path d="M21 209.5 L34 203.5" stroke-dasharray="1 2"/>
    <path d="M14.3 254.3 L20.6 245.4 A5 5 0 0 1 29.5 249.6 Q29 254.3 24.6 254.3 Z" stroke-linejoin="round"/>
    <path d="M30.2 238.6 Q27.4 241.6 29.8 243.9 Q31.8 245.6 33.8 243.9 L39.6 238.3"/>
    <circle cx="26" cy="318" r="10.8"/>
    <path d="M23 320.4 Q26.2 325.2 29.4 320.4"/>
    <path d="M8 342.3 H44" stroke="#434651"/>
    <g transform="translate(26.1 366.8) rotate(-45)">
      <rect x="-12" y="-4.3" width="24" height="8.6" rx="1"/>
      <path d="M-7 -4.3 v3 M-3 -4.3 v2 M1 -4.3 v3 M5 -4.3 v2 M9 -4.3 v3" stroke-width="1"/>
    </g>
    <circle cx="24.5" cy="401.3" r="8"/>
    <path d="M30.2 407 L34.5 411.5 M24.5 397.3 v8 M20.5 401.3 h8"/>
    <path d="M8 427.3 H44" stroke="#434651"/>
    <path d="M18.3 460.3 V451 A7.9 7.9 0 0 1 34.1 451 V460.3 H29.7 V451 A3.5 3.5 0 0 0 22.7 451 V460.3 Z M18.3 456 H22.7 M29.7 456 H34.1"/>
    <g transform="translate(22.5 486) rotate(-45)"><path d="M-8.5 -3 H7.5 V3 H-8.5 L-11 0 Z M4.5 -3 V3"/></g>
    <rect x="27.5" y="490" width="8.5" height="7.5" rx="1"/>
    <path d="M29.5 490 V487 A2.3 2.3 0 0 1 34 486.5"/>
  </g>
</svg>

<svg width="895" height="514"><circle cx="23.4" cy="316.6" r="0.95" fill="#d1d4dc"/><circle cx="28.5" cy="316.6" r="0.95" fill="#d1d4dc"/><rect x="31" y="493" width="1.3" height="2" fill="#d1d4dc"/></svg>

<svg width="895" height="514"><path d="M20.3 277 V273.6 H32.2 V277 M26.25 273.6 V290.6 M23.3 290.6 H29.2" fill="none" stroke="#d1d4dc" stroke-width="1.1"/></svg>
<!-- RIGHT TOOLBAR -->
<svg width="895" height="514">
  <g fill="none" stroke="#d1d4dc" stroke-width="1.2">
    <rect x="861.5" y="54.5" width="23.5" height="22" rx="3.5"/>
    <path d="M866 60.5 H880.5 M866 65.5 H880.5 M866 70.5 H880.5"/>
    <circle cx="873" cy="112.4" r="10.6"/>
    <path d="M861.5 107.6 A5.4 5.4 0 0 1 869.3 101.2 M884.5 107.6 A5.4 5.4 0 0 0 876.7 101.2"/>
    <path d="M873.5 106.2 V113.6 H868"/>
    <path d="M858 148.5 H867 M862.5 144 V153"/>
    <path d="M870.3 147.5 H882 Q885 147.5 885 150.5 V166.6 Q885 169.6 882 169.6 H864.5 Q861.5 169.6 861.5 166.6 V156"/>
    <rect x="865.5" y="152.6" width="15.7" height="4.3" rx="2.15"/>
    <path d="M866.2 160.5 H879.8 M866.2 164.5 H879.8"/>
    <path d="M871.7 189.4 C869.5 193.5 862.5 197.5 862.5 205 C862.5 211 866 215 869.8 215.3 L872.4 211.6 L875.2 215.3 C880 215 884 211 884 205.5 C884 201.5 882.5 199 880.5 197.3 C880 199.5 878.7 201 877.1 201.6 C876.8 196 874.5 192 871.7 189.4 Z" stroke-linejoin="round"/>
    <rect x="861.5" y="240.5" width="23.5" height="21" rx="3"/>
    <path d="M861.5 247.5 H885"/>
    <rect x="865.5" y="238.5" width="3" height="5" rx="1.2" fill="#131722"/>
    <rect x="877.5" y="238.5" width="3" height="5" rx="1.2" fill="#131722"/>
    <path d="M868 300.3 A9.3 9.3 0 1 1 877.2 300.3 V305.3 Q877.2 307.6 875 307.6 H870.2 Q868 307.6 868 305.3 Z M868 303.8 H877.2 M869.5 292.8 H875.5 M872.6 292.8 V300.3 M868 300.3 H877.2"/>
    <path d="M856 324.3 H889.4" stroke="#434651"/>
    <path d="M861.5 362.5 V345.5 Q861.5 342.5 864.5 342.5 H878.5 Q881.5 342.5 881.5 345.5 V349.8 Q884.2 350 884.2 352.5 V358 M861.5 362.5 L866.2 357.8 H872"/>
    <path d="M868.4 402.2 A8.4 8.4 0 1 1 876.8 402.2 V408 Q876.8 410.3 874.6 410.3 H870.6 Q868.4 410.3 868.4 408 Z M868.4 406 H876.8 M869.8 395.5 H875.4 M872.6 395.5 V402.2 M868.4 402.2 H876.8"/>
    <path d="M860.8 389.5 Q858 395.5 860.8 401.5 M858 387.5 Q854.5 395.5 858 403.5 M884.4 389.5 Q887.2 395.5 884.4 401.5 M887.2 387.5 Q890.7 395.5 887.2 403.5"/>
    <path d="M865.5 437 L875 442.5 L865.5 448 Z" stroke-linejoin="round"/>
    <path d="M878.6 436.5 Q883.2 443.5 878.6 450.5 M881 430.8 Q889.8 443 881 455.2"/>
    <path d="M866 492 V484.5 Q866 478.5 871 476.3 L873.7 475 L876.4 476.3 Q881.4 478.5 881.4 484.5 V492"/>
    <rect x="863.8" y="492" width="19.8" height="3.8" rx="1.9"/>
    <path d="M871 496 A2.7 2.7 0 0 0 876.4 496"/>
  </g>
  <path d="M879 352.2 H895 V385 H879 A16.4 16.4 0 0 1 879 352.2 Z" fill="#2f2e2c"/>
  <g fill="#a87df4">
    <path d="M876.3 361.3 Q877.5 367.2 883.3 368.3 Q877.5 369.5 876.3 375.6 Q875 369.5 869.3 368.3 Q875 367.2 876.3 361.3 Z"/>
    <path d="M885.9 358 Q886.6 361.4 890 362.1 Q886.6 362.8 885.9 366.2 Q885.2 362.8 881.8 362.1 Q885.2 361.4 885.9 358 Z"/>
    <path d="M885.9 371.3 Q886.5 374.3 889.4 374.9 Q886.5 375.5 885.9 378.5 Q885.3 375.5 882.4 374.9 Q885.3 374.3 885.9 371.3 Z"/>
  </g>
</svg>

<!-- BOTTOM -->
<div class="t" style="left:70px;top:446px;font-size:13.5px;color:#d1d4dc">1D</div>
<div class="t" style="left:98px;top:446px;font-size:13.5px;color:#d1d4dc">5D</div>
<div class="t" style="left:126px;top:446px;font-size:13.5px;color:#d1d4dc">1M</div>
<div class="t" style="left:155px;top:446px;font-size:13.5px;color:#d1d4dc">3M</div>
<div class="t" style="left:184px;top:446px;font-size:13.5px;color:#d1d4dc">6M</div>
<div class="t" style="left:214px;top:446px;font-size:13.5px;color:#d1d4dc">YTD</div>
<div class="t" style="left:251px;top:446px;font-size:13.5px;color:#d1d4dc">1Y</div>
<div class="t" style="left:278px;top:446px;font-size:13.5px;color:#d1d4dc">5Y</div>
<div class="t" style="left:305px;top:446px;font-size:13.5px;color:#d1d4dc">All</div>
<div class="t" style="left:746px;top:446px;font-size:13.5px;color:#d1d4dc;letter-spacing:0px;-webkit-text-stroke:0.4px #d1d4dc">15:31:21 (UTC)</div>
<div class="t" style="left:72px;top:488px;font-size:14px;color:#d1d4dc;letter-spacing:-0.15px;-webkit-text-stroke:0.3px #d1d4dc">Stock Screener</div>
<div class="t" style="left:210px;top:488px;font-size:14px;color:#d1d4dc;-webkit-text-stroke:0.3px #d1d4dc">Pine Editor</div>
<div class="t" style="left:311px;top:488px;font-size:14px;color:#d1d4dc;-webkit-text-stroke:0.3px #d1d4dc">Strategy Tester</div>
<div class="t" style="left:437px;top:488px;font-size:14px;color:#d1d4dc;-webkit-text-stroke:0.3px #d1d4dc">Trading Panel</div>
<svg width="895" height="514">
  <rect x="332" y="441" width="1" height="22" fill="#434651"/>
  <g fill="none" stroke="#d1d4dc" stroke-width="1.1">
    <path d="M347.5 450.6 V447 Q347.5 444.5 350 444.5 H362.2 Q364.7 444.5 364.7 447 V456.8 Q364.7 459.3 362.2 459.3 H356.2 M347.5 448.5 H364.7 M352.5 441.8 V448.5 M359.5 441.8 V448.5 M346 456.5 H353.6 M350.4 453.2 L353.6 456.5 L350.4 459.7"/>
    <path d="M177.5 493 l3.8 3.5 l3.8 -3.5"/>
    <path d="M782.8 495.8 L791.5 489 L800.2 495.8" stroke-width="1.2"/>
    <path d="M819.5 491 V488.5 Q819.5 486.5 821.5 486.5 H832.5 Q834.5 486.5 834.5 488.5 V491 M834.5 497 V499.5 Q834.5 501.5 832.5 501.5 H821.5 Q819.5 501.5 819.5 499.5 V497" stroke-width="1.3"/>
    <path d="M808.5 419 L811.8 413.3 H818.2 L821.5 419 L818.2 424.7 H811.8 Z" stroke="#c3c5cc" stroke-width="1.2" stroke-linejoin="round"/>
    <circle cx="815" cy="419" r="2" stroke="#c3c5cc" stroke-width="1.3"/>
  </g>
  <circle cx="736.5" cy="391.5" r="10.6" fill="#1f1a2a"/>
  <circle cx="736.5" cy="391.5" r="9.2" fill="#221a30" stroke="#9a4cc6" stroke-width="1.5"/>
  <path d="M739.8 386.2 L732.6 392.3 H736.2 L733.4 396.8 L740.6 390.7 H737 Z" fill="#a552d8"/>
  <!-- TV logo -->
  <g fill="#d8dae2" stroke="#131722" stroke-width="1.6" paint-order="stroke" stroke-linejoin="round">
    <path d="M68.2 374.9 H79.8 V389.8 H73.7 V380.8 H68.2 Z"/>
    <circle cx="85.1" cy="377.8" r="2.7"/>
    <path d="M90.9 374.9 H97.9 L91.8 389.8 H85.1 Z"/>
  </g>
  <path d="M0 507 Q3 509 4 514 H0 Z" fill="#2962ff"/>
  <circle cx="910" cy="524" r="23.5" fill="#161c2c" stroke="#2458c8" stroke-width="1.8" stroke-opacity="0.75"/>
</svg>
</body></html>
